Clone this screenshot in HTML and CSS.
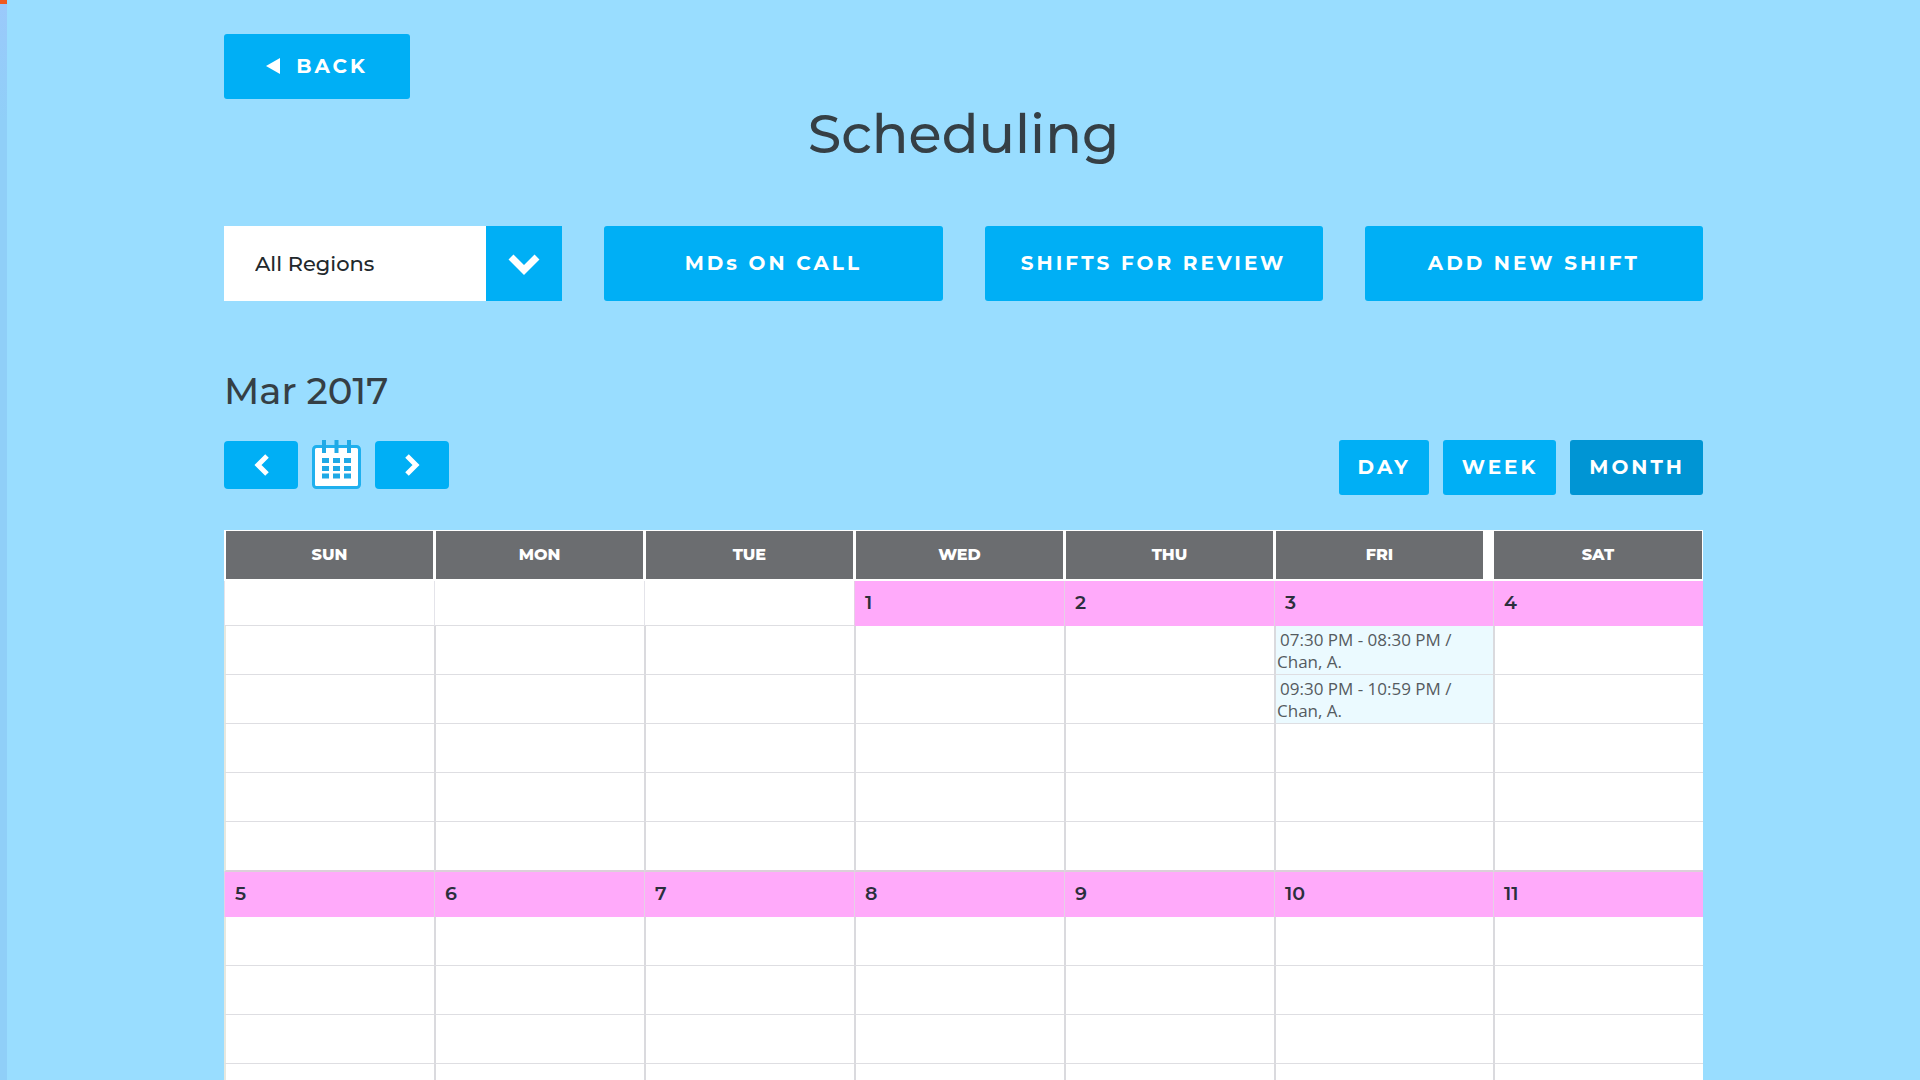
FILE: index.html
```html
<!DOCTYPE html>
<html lang="en">
<head>
<meta charset="utf-8">
<title>Scheduling</title>
<link rel="stylesheet" href="styles.css">
</head>
<body>
<div class="edge"><div class="edge-tab"></div></div>
<main class="page">
  <button class="btn btn-back" type="button"><svg class="icon-back" viewBox="0 0 14 16"><path d="M14 0v16L0 8z"/></svg>BACK</button>
  <h1 class="title">Scheduling</h1>

  <div class="actions">
    <div class="region">
      <select class="region-select" aria-label="Region"><option>All Regions</option></select>
      <span class="region-arrow"><svg class="icon-down" viewBox="0 0 34 22"><path d="M4 4l13 13L30 4"/></svg></span>
    </div>
    <button class="btn" type="button">MDs ON CALL</button>
    <button class="btn" type="button">SHIFTS FOR REVIEW</button>
    <button class="btn" type="button">ADD NEW SHIFT</button>
  </div>

  <h2 class="month">Mar 2017</h2>
  <div class="toolbar">
    <div class="nav">
      <button class="btn btn-nav" type="button" aria-label="Previous"><svg class="icon-chevron" viewBox="0 0 16 22"><path d="M14 2l-9 9 9 9"/></svg></button>
      <button class="btn-calendar" type="button" aria-label="Pick a date"><svg class="icon-calendar" viewBox="0 0 49 49">
        <rect x="1.500" y="6.500" width="46" height="41" rx="3" fill="#fff" stroke="#1fb0ee" stroke-width="3"/>
        <path d="M12 0v13M24.500 0v13M37 0v13" stroke="#1fa9e6" stroke-width="4"/>
        <path d="M10 20.500h29M10 28.500h29M10 36h29" stroke="#1fa9e6" stroke-width="5" stroke-dasharray="7 4"/>
      </svg></button>
      <button class="btn btn-nav" type="button" aria-label="Next"><svg class="icon-chevron" viewBox="0 0 16 22"><path d="M3 2l9 9-9 9"/></svg></button>
    </div>
    <div class="views">
      <button class="btn btn-view" type="button">DAY</button>
      <button class="btn btn-view" type="button">WEEK</button>
      <button class="btn btn-view active" type="button">MONTH</button>
    </div>
  </div>

  <table class="calendar">
    <colgroup><col><col><col><col><col><col class="col-wide"><col></colgroup>
    <thead>
      <tr><th>SUN</th><th>MON</th><th>TUE</th><th>WED</th><th>THU</th><th class="head-gap">FRI</th><th>SAT</th></tr>
    </thead>
    <tbody>
      <tr class="dates"><td class="blank"></td><td class="blank"></td><td class="blank"></td><td>1</td><td>2</td><td>3</td><td>4</td></tr>
      <tr class="slots"><td></td><td></td><td></td><td></td><td></td><td class="shift">07:30 PM - 08:30 PM / Chan, A.</td><td></td></tr>
      <tr class="slots"><td></td><td></td><td></td><td></td><td></td><td class="shift">09:30 PM - 10:59 PM / Chan, A.</td><td></td></tr>
      <tr class="slots"><td></td><td></td><td></td><td></td><td></td><td></td><td></td></tr>
      <tr class="slots"><td></td><td></td><td></td><td></td><td></td><td></td><td></td></tr>
      <tr class="slots"><td></td><td></td><td></td><td></td><td></td><td></td><td></td></tr>
    </tbody>
    <tbody>
      <tr class="dates"><td>5</td><td>6</td><td>7</td><td>8</td><td>9</td><td>10</td><td>11</td></tr>
      <tr class="slots"><td></td><td></td><td></td><td></td><td></td><td></td><td></td></tr>
      <tr class="slots"><td></td><td></td><td></td><td></td><td></td><td></td><td></td></tr>
      <tr class="slots"><td></td><td></td><td></td><td></td><td></td><td></td><td></td></tr>
      <tr class="slots"><td></td><td></td><td></td><td></td><td></td><td></td><td></td></tr>
    </tbody>
  </table>
</main>
</body>
</html>
```
FILE: styles.css
```css
* { box-sizing: border-box; }

body {
  margin: 0;
  min-height: 100vh;
  display: grid;
  grid-template-columns: 7px 1fr;
  background: #99ddff;
  color: #353f45;
  font-family: Montserrat, Inter, "Liberation Sans", sans-serif;
}

.edge { background: linear-gradient(#9bc9fb, #90cff8 120px); }
.edge-tab { height: 4px; background: #f0591e; }

.page {
  width: 100%;
  max-width: 1479px;
  margin: 0 auto;
  padding-top: 34px;
}

.btn {
  display: flex;
  align-items: center;
  justify-content: center;
  border: 0;
  border-radius: 3px;
  padding: 0 0 2px;
  background: #00aff5;
  color: #fff;
  font: inherit;
  font-size: 20px;
  font-weight: 700;
  letter-spacing: 3px;
  white-space: nowrap;
}

.btn-back {
  width: 186px;
  height: 65px;
  gap: 16px;
}
.icon-back { width: 14px; height: 16px; fill: #fff; }

.title {
  margin: 0;
  font-size: 54px;
  line-height: 70px;
  font-weight: 500;
  text-align: center;
}

.actions {
  display: grid;
  grid-template-columns: repeat(4, 1fr);
  gap: 42px;
  margin-top: 57px;
}
.actions .btn, .region { height: 75px; }

.region {
  display: grid;
  grid-template-columns: 1fr 76px;
}
.region-select {
  appearance: none;
  border: 0;
  border-radius: 0;
  padding: 0 31px;
  background: #fff;
  color: #22282c;
  font: inherit;
  font-size: 21px;
  font-weight: 500;
}
.region-arrow {
  display: flex;
  align-items: center;
  justify-content: center;
  background: #00aff5;
}
.icon-down { width: 34px; height: 22px; fill: none; stroke: #fff; stroke-width: 7; }

.month {
  margin: 68px 0 0;
  font-size: 37px;
  line-height: 44px;
  font-weight: 500;
}

.toolbar {
  display: flex;
  justify-content: space-between;
  margin-top: 27px;
}
.nav, .views { display: flex; gap: 14px; }
.btn-nav { width: 74px; height: 48px; margin-top: 1px; padding: 0; border-radius: 4px; }
.icon-chevron { width: 16px; height: 22px; fill: none; stroke: #fff; stroke-width: 5; }
.btn-calendar { width: 49px; height: 49px; border: 0; padding: 0; background: none; }
.icon-calendar { display: block; width: 49px; height: 49px; }
.btn-view { height: 55px; padding: 0 18px 2px 19px; }
.btn-view.active { background: #0095d4; }

.calendar {
  width: 100%;
  margin-top: 35px;
  table-layout: fixed;
  border-collapse: separate;
  border-spacing: 0;
  background: #fff;
}
.col-wide { width: 219px; }

.calendar th {
  height: 51px;
  padding: 0 0 2px;
  border: 2px solid #fff;
  border-width: 1px 1px 2px 2px;
  background: #6b6d70;
  color: #fff;
  font-size: 16px;
  font-weight: 800;
}
.calendar .head-gap { border-right-width: 10px; }
.calendar .head-gap + th { border-left-width: 1px; }

.calendar td { padding: 0; }

.dates td {
  height: 45px;
  padding: 0 0 2px 10px;
  border-left: 1px solid #e6cfe6;
  background: #ffaafa;
  color: #2b2f3c;
  font-size: 19px;
  font-weight: 600;
}
.dates .blank { border-left-color: #e4e4ea; border-bottom: 1px solid #dedee2; background: #fff; }

.slots td {
  height: 49px;
  border-left: 2px solid #dadade;
  border-bottom: 1px solid #dedee2;
}
.slots td:first-child { border-left-color: #e6e8e0; }
.slots:last-child td { height: 50px; border-bottom: 2px solid #dccfd9; }

.slots .shift {
  padding: 2px 30px 0 1px;
  background: #ebfaff;
  color: #555b60;
  font-family: "Open Sans", "Noto Sans", sans-serif;
  font-size: 17px;
  line-height: 22px;
  text-indent: 3px;
}
```
